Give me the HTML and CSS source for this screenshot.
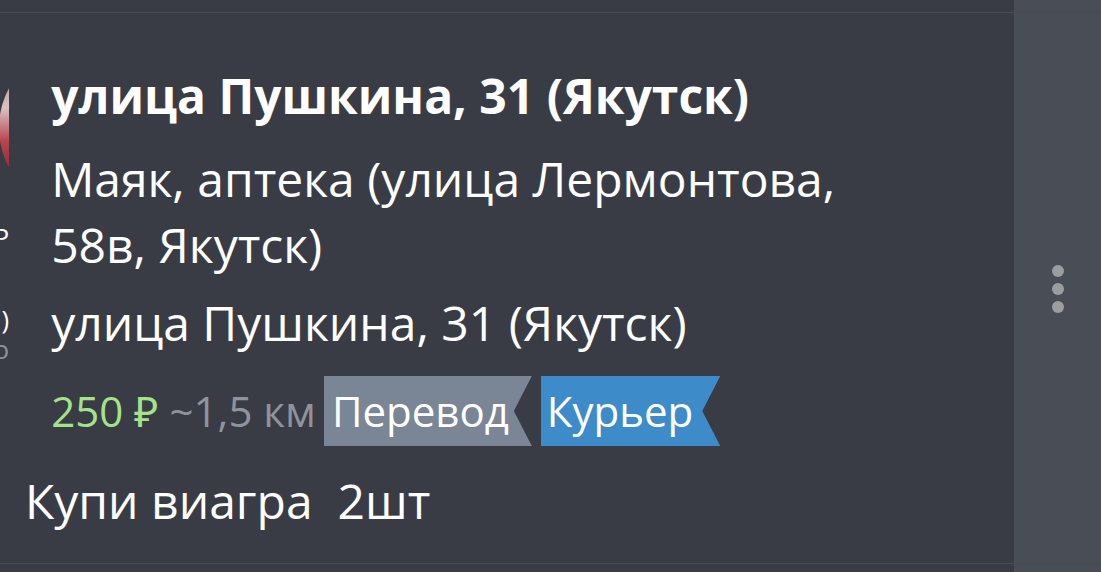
FILE: index.html
```html
<!DOCTYPE html>
<html lang="ru">
<head>
    <meta charset="UTF-8">
    <title>Заказы</title>
    <link rel="stylesheet" href="styles.css">
</head>
<body>
    <div class="list">
        <div class="row row-prev">
            <div class="main"></div>
            <div class="side"></div>
        </div>

        <div class="row order">
            <div class="main">
                <div class="peek">
                    <div class="avatar"></div>
                    <div class="peek-text light">Р</div>
                    <div class="peek-text light">)</div>
                    <div class="peek-text dim">о</div>
                </div>
                <div class="body">
                    <div class="title">улица Пушкина, 31 (Якутск)</div>
                    <div class="line">Маяк, аптека (улица Лермонтова, 58в, Якутск)</div>
                    <div class="line">улица Пушкина, 31 (Якутск)</div>
                    <div class="meta">
                        <span class="price">250 ₽</span>
                        <span class="distance">~1,5 км</span>
                        <span class="tag tag-transfer">Перевод</span>
                        <span class="tag tag-courier">Курьер</span>
                    </div>
                </div>
            </div>
            <div class="side">
                <div class="dots">
                    <span></span>
                    <span></span>
                    <span></span>
                </div>
            </div>
        </div>

        <div class="row order-note">
            <div class="main">
                <div class="note">Купи виагра&nbsp; 2шт</div>
            </div>
            <div class="side"></div>
        </div>

        <div class="row row-next">
            <div class="main"></div>
            <div class="side"></div>
        </div>
    </div>
</body>
</html>
```

FILE: styles.css
```css
* {
    margin: 0;
    padding: 0;
    box-sizing: border-box;
}

body {
    background-color: #393c45;
    color: #fff;
    font-family: 'Open Sans', 'Noto Sans', sans-serif;
    overflow: hidden;
}

.list {
    display: flex;
    flex-direction: column;
    height: 100vh;
}

.row {
    display: flex;
}

.main {
    flex: 1;
    display: flex;
}

.side {
    width: 87px;
    background: #484d56;
    display: flex;
    align-items: center;
    justify-content: center;
}

.row-prev {
    height: 13px;
    border-bottom: 1px solid rgba(255, 255, 255, 0.08);
}

.row-next {
    flex: 1;
    border-top: 1px solid rgba(255, 255, 255, 0.08);
}

/* cropped column on the left edge */
.peek {
    width: 12px;
    overflow: hidden;
    display: flex;
    flex-direction: column;
    align-items: flex-end;
    padding-top: 31px;
}

.avatar {
    flex: none;
    width: 168px;
    height: 168px;
    border-radius: 50%;
    margin-right: -158px;
    background: linear-gradient(180deg, #6a2a30 0, #c9a9ac 28%, #d7c3c5 38%, #b8444d 58%, #8a222b 80%, #5a1a20 100%);
}

.peek-text {
    flex: none;
    font-size: 26px;
    line-height: 26px;
}

.peek-text.light {
    color: #fff;
}

.peek-text.dim {
    color: #8e939c;
}

.peek .peek-text:nth-child(2) {
    margin-top: 12px;
}

.peek .peek-text:nth-child(3) {
    margin-top: 56px;
}

.peek .peek-text:nth-child(4) {
    margin-top: 4px;
}

.body {
    padding: 50px 150px 0 42px;
}

.title {
    font-size: 48px;
    font-weight: 700;
    line-height: 66px;
    margin-bottom: 17px;
}

.line {
    font-size: 48px;
    line-height: 66px;
    margin-bottom: 12px;
}

.line + .line {
    margin-bottom: 20px;
}

.meta {
    display: flex;
    align-items: center;
    font-size: 42px;
    line-height: 70px;
}

.price {
    color: #a4e28b;
    margin-right: 11px;
}

.distance {
    color: #8e939c;
    margin-right: 8px;
}

.tag {
    height: 70px;
    padding: 0 23px 0 8px;
    clip-path: polygon(0 0, 100% 0, calc(100% - 18px) 50%, 100% 100%, 0 100%);
}

.tag-transfer {
    background: #7a8596;
    margin-right: 9px;
}

.tag-courier {
    background: #3e8bc9;
    padding: 0 27px 0 6px;
}

.order-note .main {
    padding: 22px 0 29px 25px;
}

.note {
    font-size: 48px;
    line-height: 66px;
}

.dots {
    display: flex;
    flex-direction: column;
    gap: 6px;
    margin-top: 119px;
}

.dots span {
    width: 12px;
    height: 12px;
    border-radius: 50%;
    background: #9c9da0;
}
```
